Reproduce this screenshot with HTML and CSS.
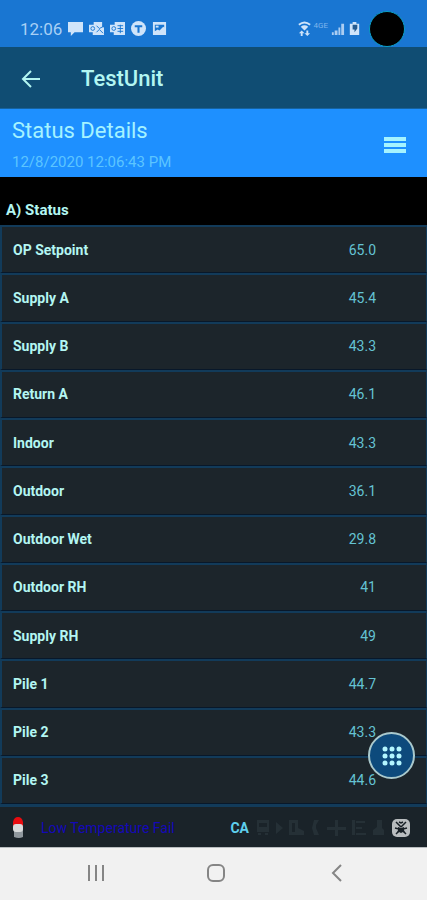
FILE: index.html
```html
<!DOCTYPE html>
<html lang="en">
<head>
<meta charset="utf-8">
<meta name="viewport" content="width=device-width, initial-scale=1">
<title>TestUnit</title>
<link rel="stylesheet" href="styles.css">
</head>
<body>
<div class="screen">
  <div class="system-bar">
    <div class="notifications">
      <span class="clock">12:06</span>
      <svg class="sys-icon" viewBox="0 0 16 16" aria-hidden="true"><path fill="currentColor" d="M0 1h16v11H7l-4 4v-4H0z"/></svg>
      <svg class="sys-icon" viewBox="0 0 16 16" aria-hidden="true"><path fill="currentColor" d="M5 1h9v5l2 1v8H4v-3H0V4h5z"/><circle cx="4" cy="8" r="2" fill="none" stroke="#1976d2"/><path fill="none" stroke="#1976d2" d="M8 5l3 3 4-2M8 12l3-3 4 4"/></svg>
      <svg class="sys-icon" viewBox="0 0 16 16" aria-hidden="true"><path fill="currentColor" d="M5 1h11v14H4v-3H0V4h5z"/><circle cx="4" cy="8" r="2" fill="none" stroke="#1976d2"/><path fill="none" stroke="#1976d2" d="M8 5h6M8 8h6M8 11h6M11 4v9"/></svg>
      <svg class="sys-icon" viewBox="0 0 16 16" aria-hidden="true"><circle cx="8" cy="8" r="8" fill="currentColor"/><path fill="none" stroke="#1976d2" stroke-width="2.200" d="M4 5.500h8M8 5.500v7"/></svg>
      <svg class="sys-icon" viewBox="0 0 16 16" aria-hidden="true"><path fill="currentColor" fill-rule="evenodd" d="M1 1h14v14H1zM3 4v7l3-2 2 1 4-4 1 1V4z"/><path fill="currentColor" d="M4 5h3v2H4z"/></svg>
    </div>
    <div class="connectivity">
      <svg class="sys-icon" viewBox="0 0 16 16" aria-hidden="true"><path fill="none" stroke="currentColor" stroke-width="2" d="M2 4q6-5 12 0"/><path fill="currentColor" d="M4 6q4-3 8 0L8 10zM5 10l3 3H6v3H4v-3H2zM11 16l-3-3h2v-3h2v3h2z"/></svg>
      <span class="network">4GE</span>
      <svg class="sys-icon" viewBox="0 0 16 16" aria-hidden="true"><path fill="currentColor" opacity=".8" d="M2 12h2v3H2zM5 10h3v5H5zM9 7h2v8H9zM12 3h3v12h-3z"/></svg>
      <svg class="sys-icon" viewBox="0 0 16 16" aria-hidden="true"><path fill="currentColor" d="M6 1h4v2h3v12H3V3h3z"/><path fill="#245b91" d="M6 4h5v4l-3 4V9H6z"/></svg>
      <span class="camera"></span>
    </div>
  </div>

  <header class="app-bar">
    <button class="icon-button" type="button" aria-label="Back">
      <svg width="20" height="20" viewBox="0 0 20 20"><path fill="none" stroke="currentColor" stroke-width="2" d="M19 10H3M10 2L2 10l8 8"/></svg>
    </button>
    <h1>TestUnit</h1>
  </header>

  <section class="details-bar">
    <div>
      <h2>Status Details</h2>
      <time datetime="2020-12-08T12:06:43">12/8/2020 12:06:43 PM</time>
    </div>
    <button class="icon-button" type="button" aria-label="Menu">
      <svg width="22" height="16" viewBox="0 0 22 16"><path fill="currentColor" d="M0 0h22v4H0zM0 6h22v4H0zM0 12h22v4H0z"/></svg>
    </button>
  </section>

  <main class="status">
    <h3>A) Status</h3>
    <dl class="readings">
      <div class="reading"><dt>OP Setpoint</dt><dd>65.0</dd></div>
      <div class="reading"><dt>Supply A</dt><dd>45.4</dd></div>
      <div class="reading"><dt>Supply B</dt><dd>43.3</dd></div>
      <div class="reading"><dt>Return A</dt><dd>46.1</dd></div>
      <div class="reading"><dt>Indoor</dt><dd>43.3</dd></div>
      <div class="reading"><dt>Outdoor</dt><dd>36.1</dd></div>
      <div class="reading"><dt>Outdoor Wet</dt><dd>29.8</dd></div>
      <div class="reading"><dt>Outdoor RH</dt><dd>41</dd></div>
      <div class="reading"><dt>Supply RH</dt><dd>49</dd></div>
      <div class="reading"><dt>Pile 1</dt><dd>44.7</dd></div>
      <div class="reading"><dt>Pile 2</dt><dd>43.3</dd></div>
      <div class="reading"><dt>Pile 3</dt><dd>44.6</dd></div>
    </dl>
    <button class="fab" type="button" aria-label="Open keypad">
      <svg width="20" height="20" viewBox="0 0 20 20"><g fill="currentColor"><circle cx="3" cy="3" r="2.500"/><circle cx="10" cy="3" r="2.500"/><circle cx="17" cy="3" r="2.500"/><circle cx="3" cy="10" r="2.500"/><circle cx="10" cy="10" r="2.500"/><circle cx="17" cy="10" r="2.500"/><circle cx="3" cy="17" r="2.500"/><circle cx="10" cy="17" r="2.500"/><circle cx="17" cy="17" r="2.500"/></g></svg>
    </button>
  </main>

  <footer class="alarm-bar">
    <svg width="12" height="22" viewBox="0 0 12 22" aria-hidden="true"><path fill="#e80c10" d="M1 9V5q1-5 5-5t5 5v4z"/><path fill="#8f979d" d="M2 12h9v8q-4 2-9 0z"/><rect x="1" y="7" width="10" height="8" rx="3" fill="#d8dadb"/></svg>
    <span class="alarm">Low Temperature Fail</span>
    <span class="mode">CA</span>
    <svg class="equipment" width="134" height="20" viewBox="0 0 134 20" aria-hidden="true">
      <g fill="#253036"><path fill-rule="evenodd" d="M1 2h12v12H1zM3 5v4h8V5z"/><path d="M2 15h3v2H2zM9 15h3v2H9zM20 4l7 6-7 6z"/><path fill-rule="evenodd" d="M33 2h9v8l6 3v4H33zM36 5v9h3V5z"/><path d="M58 2h5l-3 5v3l3 7h-5l-2-7zM79 2h3v7h8v3h-8v6h-3v-6h-8V9h8zM96 2h3v15h-3zM100 3h9v2h-9zM100 9h6v2h-6zM100 15h10v2h-10zM121 2h5v8l2 2v5h-11v-5l4-3z"/></g>
    </svg>
    <svg width="18" height="18" viewBox="0 0 18 18" aria-hidden="true"><rect width="18" height="18" rx="5" fill="#b9bdbf"/><g fill="none" stroke="#182026" stroke-width="1.500"><path d="M9 8L4 3M9 8l5-5M3 9l4 1M15 9l-4 1M7 12l-3 3M11 12l3 3M7 3l2 1 2-1"/></g><path fill="#182026" d="M6 8l3 1 3-1v3l1 3-2-1-2 1-2-1-2 1 1-3z"/></svg>
  </footer>

  <nav class="nav-bar" aria-label="System navigation">
    <button class="icon-button" type="button" aria-label="Recent apps"><svg width="18" height="18" viewBox="0 0 18 18"><path stroke="currentColor" stroke-width="2" d="M2 1v16M9 1v16M16 1v16"/></svg></button>
    <button class="icon-button" type="button" aria-label="Home"><svg width="18" height="18" viewBox="0 0 18 18"><rect x="1" y="1" width="16" height="16" rx="5" fill="none" stroke="currentColor" stroke-width="2"/></svg></button>
    <button class="icon-button" type="button" aria-label="Back"><svg width="18" height="18" viewBox="0 0 18 18"><path fill="none" stroke="currentColor" stroke-width="2" d="M13 1L5 9l8 8"/></svg></button>
  </nav>
</div>
</body>
</html>
```
FILE: styles.css
```css
* { box-sizing: border-box; }

body {
  margin: 0;
  background: #000;
  color: #b3f6f2;
  font-family: Roboto, "Liberation Sans", sans-serif;
  font-size: 14px;
}

h1, h2, h3, dl, dd { margin: 0; }

.screen {
  display: flex;
  flex-direction: column;
  min-height: 100vh;
}

.icon-button {
  display: grid;
  place-items: center;
  padding: 0;
  border: 0;
  background: none;
  color: inherit;
}

.system-bar {
  display: flex;
  align-items: center;
  justify-content: space-between;
  height: 47px;
  padding: 10px 22px 0 20px;
  background: #1976d2;
  color: #cfe4fa;
}

.notifications,
.connectivity {
  display: flex;
  align-items: center;
}

.notifications { gap: 6px; }

.connectivity { gap: 2px; }

.clock {
  font-size: 17px;
  color: #a8d0f5;
}

.sys-icon {
  width: 15px;
  height: 15px;
}

.network {
  padding-bottom: 6px;
  font-size: 8px;
  color: #7fb5ec;
}

.camera {
  width: 36px;
  height: 36px;
  margin-left: 5px;
  border: 1px solid #0aa0c8;
  border-radius: 50%;
  background: #000;
}

.app-bar {
  display: flex;
  align-items: center;
  gap: 40px;
  height: 62px;
  padding: 2px 21px 0;
  border-bottom: 1px solid #1563a0;
  background: #104d73;
}

.app-bar h1 {
  font-size: 22px;
  font-weight: 500;
}

.details-bar {
  display: flex;
  align-items: center;
  justify-content: space-between;
  height: 68px;
  padding: 3px 21px 0 12px;
  background: #1e90ff;
  color: #a5f3ff;
}

.details-bar h2 {
  font-size: 22px;
  font-weight: 400;
  line-height: 34px;
}

.details-bar time {
  display: block;
  font-size: 15px;
  line-height: 28px;
  color: #5cc5ff;
}

.status {
  position: relative;
  display: flex;
  flex: 1;
  flex-direction: column;
}

.status h3 {
  padding: 17px 6px 0;
  height: 48px;
  font-size: 15px;
  font-weight: 700;
  line-height: 32px;
}

.readings {
  display: flex;
  flex: 1;
  flex-direction: column;
}

.reading {
  display: flex;
  flex: 1;
  align-items: center;
  justify-content: space-between;
  min-height: 40px;
  padding: 0 50px 0 11px;
  border: 2px solid #123b5a;
  border-right-width: 1px;
  border-bottom: 1px solid #08182a;
  background: #1c252b;
}

.reading dt { font-weight: 700; }

.reading dd {
  font-size: 14px;
  color: #64c3d3;
}

.fab {
  position: absolute;
  right: 12px;
  bottom: 25px;
  display: grid;
  place-items: center;
  width: 47px;
  height: 47px;
  padding: 0;
  border: 2px solid #a9c9cd;
  border-radius: 50%;
  background: #0d4a7c;
  color: #b3f6ff;
}

.alarm-bar {
  display: flex;
  align-items: center;
  height: 43px;
  padding: 2px 17px 0 12px;
  border-top: 3px solid #123b5a;
  background: #1a2329;
}

.alarm {
  flex: 1;
  margin-left: 17px;
  color: #1408b8;
}

.mode {
  font-weight: 700;
  color: #5fd0ee;
}

.equipment { margin: 0 2px 0 7px; }

.nav-bar {
  display: flex;
  align-items: center;
  justify-content: space-around;
  height: 53px;
  padding: 0 30px 2px 36px;
  border-top: 1px solid #b8bcbf;
  background: #f1f1f1;
  color: #858585;
}
```
